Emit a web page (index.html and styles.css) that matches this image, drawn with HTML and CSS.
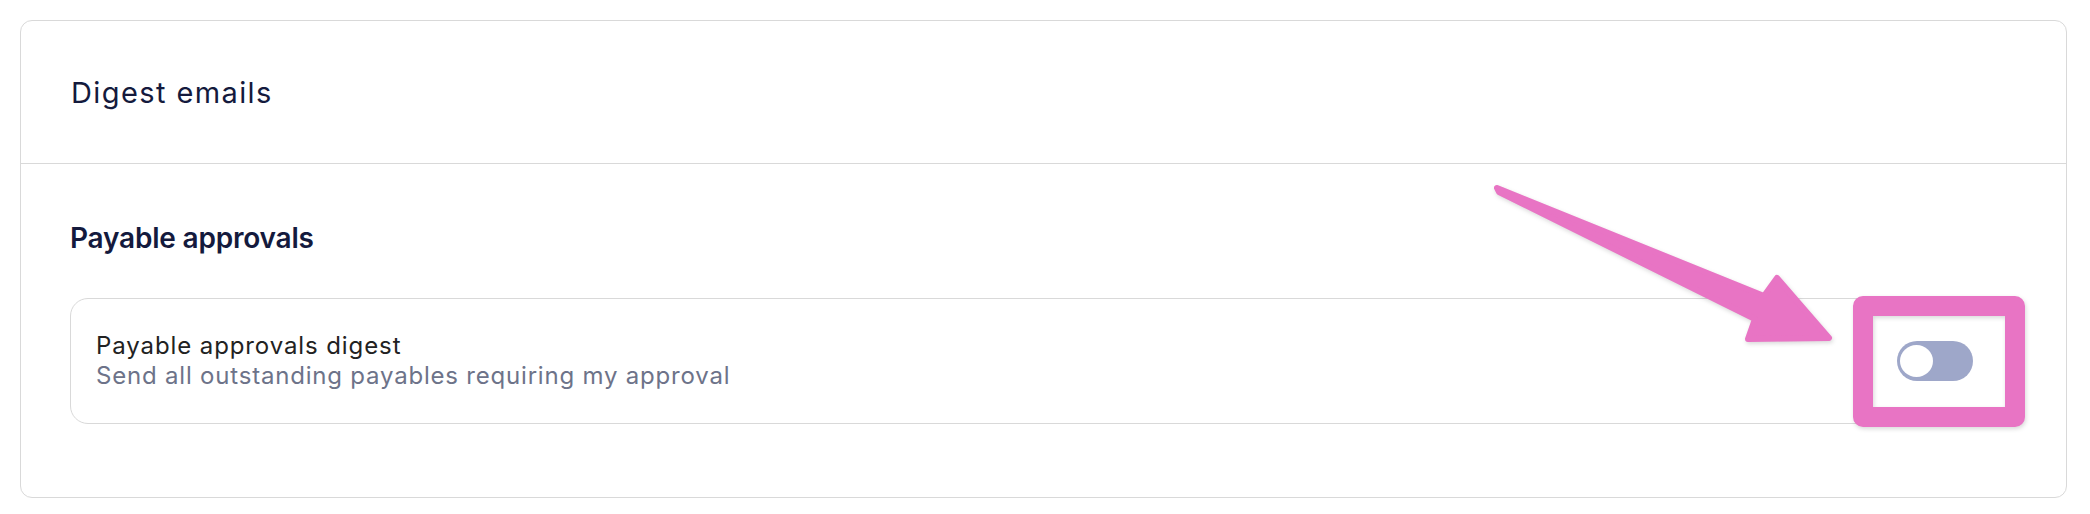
FILE: index.html
```html
<!DOCTYPE html>
<html lang="en">
<head>
    <meta charset="UTF-8">
    <meta name="viewport" content="width=device-width, initial-scale=1.0">
    <title>Digest emails</title>
    <link rel="stylesheet" href="styles.css">
</head>
<body>
    <div class="page">
        <div class="card">
            <div class="card-header">
                <h2>Digest emails</h2>
            </div>
            <div class="card-body">
                <h3>Payable approvals</h3>
                <div class="setting">
                    <div class="setting-text">
                        <div class="setting-title">Payable approvals digest</div>
                        <div class="setting-desc">Send all outstanding payables requiring my approval</div>
                    </div>
                    <label class="toggle">
                        <input type="checkbox">
                        <span class="knob"></span>
                    </label>
                </div>
            </div>
        </div>

        <!-- annotation -->
        <svg class="annotation" width="2090" height="514" viewBox="0 0 2090 514">
            <g class="mark">
                <polygon points="1497,188 1764,296 1777,278 1829,338 1748,339 1755,319 1499,192"
                         fill="#e874c4" stroke="#e874c4" stroke-width="6" stroke-linejoin="round"/>
                <rect x="1863" y="306" width="152" height="111" fill="none"
                      stroke="#e874c4" stroke-width="20" stroke-linejoin="round"/>
            </g>
        </svg>
    </div>
</body>
</html>
```

FILE: styles.css
```css
* {
    box-sizing: border-box;
}
body {
    margin: 0;
    font-family: Inter, "Liberation Sans", sans-serif;
    background: #fff;
}
.page {
    position: relative;
    padding: 20px 23px 17px 20px;
}
.card {
    border: 1px solid #d9d9d9;
    border-radius: 12px;
}
.card-header {
    height: 143px;
    display: flex;
    align-items: center;
    padding: 0 50px;
    border-bottom: 1px solid #d9d9d9;
}
.card-header h2 {
    margin: 0;
    font-size: 29px;
    font-weight: 400;
    letter-spacing: 1.4px;
    color: #141a3d;
}
.card-body {
    padding: 56px 49px 73px 49px;
}
.card-body h3 {
    margin: 0 0 42px;
    font-size: 28px;
    line-height: 36px;
    font-weight: 600;
    letter-spacing: -0.2px;
    color: #141a3d;
}
.setting {
    display: flex;
    align-items: center;
    justify-content: space-between;
    height: 126px;
    padding: 0 43px 0 25px;
    border: 1px solid #d9d9d9;
    border-radius: 18px;
}
.setting-title {
    font-size: 24px;
    line-height: 30px;
    letter-spacing: 0.9px;
    color: #222;
}
.setting-desc {
    font-size: 24px;
    line-height: 30px;
    letter-spacing: 0.8px;
    color: #6d7389;
}
.toggle {
    position: relative;
    width: 76px;
    height: 40px;
    border-radius: 20px;
    background: #9ea7c9;
}
.toggle input {
    display: none;
}
.knob {
    position: absolute;
    left: 3px;
    top: 4px;
    width: 33px;
    height: 32px;
    border-radius: 50%;
    background: #fff;
}
.annotation {
    position: absolute;
    left: 0;
    top: 0;
    pointer-events: none;
}
.mark {
    filter: drop-shadow(1px 2px 2px rgba(0, 0, 0, 0.15));
}
```
